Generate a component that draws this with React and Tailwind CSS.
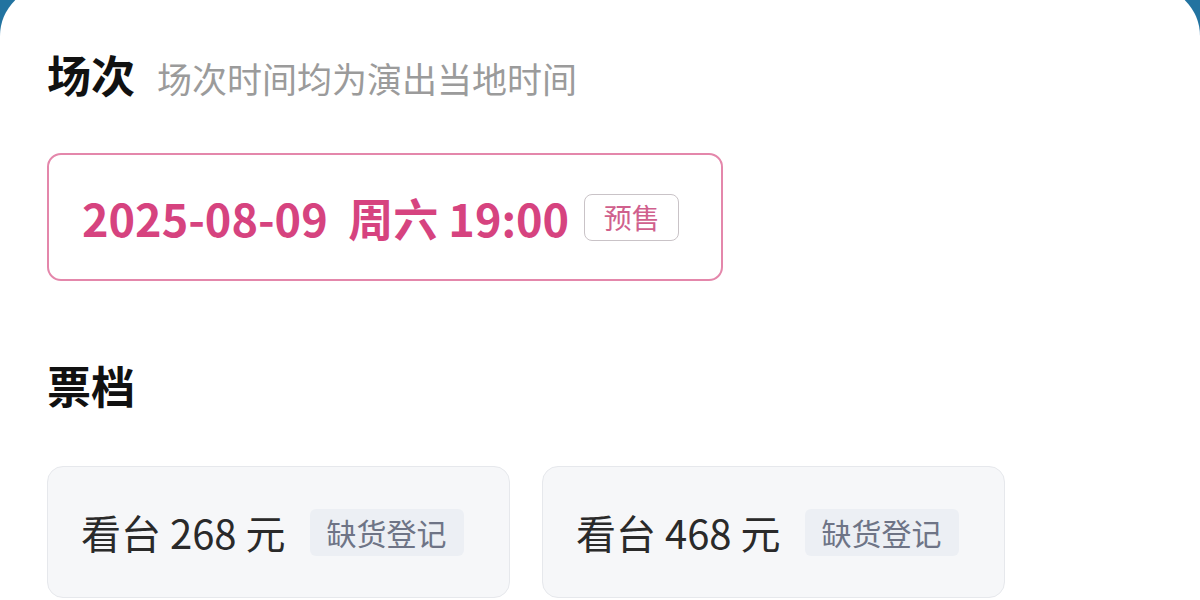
export default function App() {
  const font = { fontFamily: '"Noto Sans CJK SC", "Noto Sans", sans-serif' };
  return (
    <div className="w-[1200px] h-[600px] overflow-hidden bg-[#2273a0]" style={font}>
      <div className="mt-[-14px] h-[620px] rounded-t-[50px] bg-white pl-[47px] pt-[66px]">
        <div className="flex items-baseline gap-[22px] h-[50px]">
          <span className="text-[44px] font-bold text-[#111] leading-none">场次</span>
          <span className="text-[35px] text-[#9b9b9b] leading-none">场次时间均为演出当地时间</span>
        </div>
        <div className="mt-[51px] w-[676px] h-[128px] rounded-[14px] border-2 border-[#e487ab] flex items-center pl-[33px]">
          <span className="text-[45px] font-semibold text-[#d6437f] leading-none">
            2025-08-09&nbsp;&nbsp;周六 19:00
          </span>
          <span className="ml-[15px] h-[47px] w-[95px] flex items-center justify-center rounded-[8px] border-[1.5px] border-[#c9c3c7] text-[28px] text-[#d0608d] leading-none">预售</span>
        </div>
        <div className="mt-[82px] text-[44px] font-bold text-[#111] leading-none">票档</div>
        <div className="mt-[59px] flex gap-[32px]">
          {["268", "468"].map((p) => (
            <div key={p} className="w-[463px] h-[132px] rounded-[16px] border border-[#e6e8ec] bg-[#f6f7f9] flex items-center pl-[33px]">
              <span className="text-[40px] text-[#2a2a2a] leading-none">看台 {p} 元</span>
              <span className="ml-[24px] h-[47px] px-[17px] flex items-center rounded-[6px] bg-[#eceff4] text-[30px] text-[#6e7486] leading-none">缺货登记</span>
            </div>
          ))}
        </div>
      </div>
    </div>
  );
}
